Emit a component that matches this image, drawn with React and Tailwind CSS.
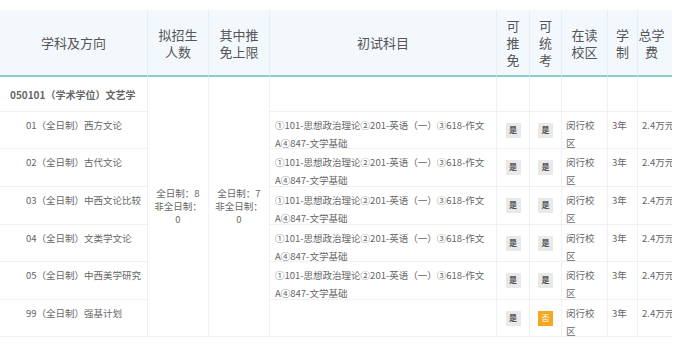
import React from "react";

const head = [
  ["学科及方向"],
  ["拟招生", "人数"],
  ["其中推", "免上限"],
  ["初试科目"],
  ["可", "推", "免"],
  ["可", "统", "考"],
  ["在读", "校区"],
  ["学", "制"],
  ["总学", "费"],
];

const exam = ["①101-思想政治理论②201-英语（一）③618-作文", "A④847-文学基础"];

const rows = [
  { name: "01（全日制）西方文论", exam, tui: true, tong: true },
  { name: "02（全日制）古代文论", exam, tui: true, tong: true },
  { name: "03（全日制）中西文论比较", exam, tui: true, tong: true },
  { name: "04（全日制）文类学文论", exam, tui: true, tong: true },
  { name: "05（全日制）中西美学研究", exam, tui: true, tong: true },
  { name: "99（全日制）强基计划", exam: null, tui: true, tong: false },
];

function Badge({ yes }) {
  return yes ? (
    <span className="inline-flex items-center justify-center w-[15px] h-[15px] bg-[#e9e9e9] text-[8px] leading-none font-bold text-[#555]">
      是
    </span>
  ) : (
    <span className="inline-flex items-center justify-center w-[15px] h-[15px] bg-[#f5a623] text-[8px] leading-none text-white">
      否
    </span>
  );
}

const cell = "border-b border-r border-[#eef0f3] text-[9.5px] text-[#666]";

export default function App() {
  return (
    <div className="bg-white w-[685px] h-[346px] pt-[10px] font-['Noto_Sans_CJK_SC',sans-serif]">
      <div className="w-[672px] overflow-hidden">
        <div className="grid w-[718px] grid-cols-[148px_61px_61px_227px_33px_32px_46px_30px_80px] grid-rows-[67px_35px_37px_38px_38px_37px_38px_37px]">
          {/* header */}
          {head.map((lines, i) => (
            <div
              key={i}
              className={
                "bg-[#f3f8fd] border-b-2 border-b-[#88cbd0] border-r border-r-[#e5edf6] flex items-center text-[13px] leading-[17px] text-[#555] " +
                (i === 8 ? "justify-start" : "justify-center")
              }
            >
              <div className={i === 8 ? "w-[27px] text-center whitespace-nowrap" : "text-center whitespace-nowrap"}>
                {lines.map((l) => (
                  <div key={l}>{l}</div>
                ))}
              </div>
            </div>
          ))}

          {/* group row */}
          <div className={cell + " flex items-center pl-[10px] font-bold text-[#333]"}>
            <span className="text-[10px]">050101（学术学位）文艺学</span>
          </div>
          <div className={cell + " row-span-7 flex items-center justify-center text-center"}>
            <div className="leading-[13px]">
              <div>全日制：8</div>
              <div>非全日制：</div>
              <div>0</div>
            </div>
          </div>
          <div className={cell + " row-span-7 flex items-center justify-center text-center"}>
            <div className="leading-[13px]">
              <div>全日制：7</div>
              <div>非全日制：</div>
              <div>0</div>
            </div>
          </div>
          <div className={cell} />
          <div className={cell} />
          <div className={cell} />
          <div className={cell} />
          <div className={cell} />
          <div className={cell} />

          {rows.map((r) => (
            <React.Fragment key={r.name}>
              <div className={cell + " leading-[18px] pl-[26px] pt-[4px] whitespace-nowrap"}>{r.name}</div>
              <div className={cell + " leading-[18px] pl-[5px] pt-[4px] whitespace-nowrap"}>
                {r.exam && r.exam.map((l) => <div key={l}>{l}</div>)}
              </div>
              <div className={cell + " flex justify-center pt-[10px]"}>
                <div>
                  <Badge yes={r.tui} />
                </div>
              </div>
              <div className={cell + " flex justify-center pt-[10px]"}>
                <div>
                  <Badge yes={r.tong} />
                </div>
              </div>
              <div className={cell + " leading-[18px] pl-[4px] pt-[4px]"}>
                <div>闵行校</div>
                <div>区</div>
              </div>
              <div className={cell + " leading-[18px] pl-[4px] pt-[4px]"}>3年</div>
              <div className={cell + " leading-[18px] pl-[4px] pt-[4px] whitespace-nowrap"}>2.4万元</div>
            </React.Fragment>
          ))}
        </div>
      </div>
    </div>
  );
}
